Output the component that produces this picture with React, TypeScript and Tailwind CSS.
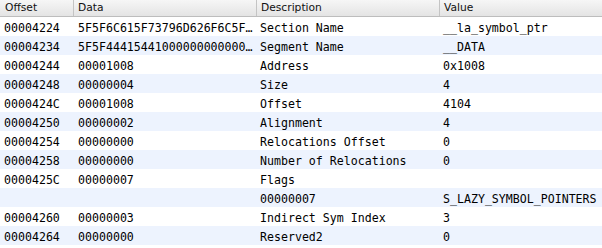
import React from "react";

type Row = { off: string; data: string; desc: string; val: string };

const rows: Row[] = [
  { off: "00004224", data: "5F5F6C615F73796D626F6C5F…", desc: "Section Name", val: "__la_symbol_ptr" },
  { off: "00004234", data: "5F5F44415441000000000000…", desc: "Segment Name", val: "__DATA" },
  { off: "00004244", data: "00001008", desc: "Address", val: "0x1008" },
  { off: "00004248", data: "00000004", desc: "Size", val: "4" },
  { off: "0000424C", data: "00001008", desc: "Offset", val: "4104" },
  { off: "00004250", data: "00000002", desc: "Alignment", val: "4" },
  { off: "00004254", data: "00000000", desc: "Relocations Offset", val: "0" },
  { off: "00004258", data: "00000000", desc: "Number of Relocations", val: "0" },
  { off: "0000425C", data: "00000007", desc: "Flags", val: "" },
  { off: "", data: "", desc: "00000007", val: "S_LAZY_SYMBOL_POINTERS" },
  { off: "00004260", data: "00000003", desc: "Indirect Sym Index", val: "3" },
  { off: "00004264", data: "00000000", desc: "Reserved2", val: "0" },
];

const mono = { fontFamily: '"DejaVu Sans Mono", monospace' };

export default function App() {
  return (
    <div className="w-[602px] h-[248px] bg-white overflow-hidden">
      <div
        className="grid grid-cols-[74px_183px_183px_1fr] h-[17px] border-b border-[#bdbdbd] bg-gradient-to-b from-[#f6f6f6] to-[#e4e4e4] text-[10.7px] leading-[16px] text-[#111]"
        style={{ fontFamily: '"DejaVu Sans", sans-serif' }}
      >
        <div className="pl-[5px] border-r border-[#c4c4c4]">Offset</div>
        <div className="pl-[4px] border-r border-[#c4c4c4]">Data</div>
        <div className="pl-[4px] border-r border-[#c4c4c4]">Description</div>
        <div className="pl-[4px]">Value</div>
      </div>
      {rows.map((r, i) => (
        <div
          key={i}
          className={`grid grid-cols-[74px_183px_183px_1fr] h-[19px] pt-[4px] text-[11.6px] leading-[15px] text-black ${
            i % 2 === 1 ? "bg-[#edf3fe]" : "bg-white"
          }`}
          style={mono}
        >
          <div className="pl-[4px] whitespace-nowrap">{r.off}</div>
          <div className="pl-[4px] whitespace-nowrap">{r.data}</div>
          <div className="pl-[3px] whitespace-nowrap">{r.desc}</div>
          <div className="pl-[3px] whitespace-nowrap">{r.val}</div>
        </div>
      ))}
    </div>
  );
}
